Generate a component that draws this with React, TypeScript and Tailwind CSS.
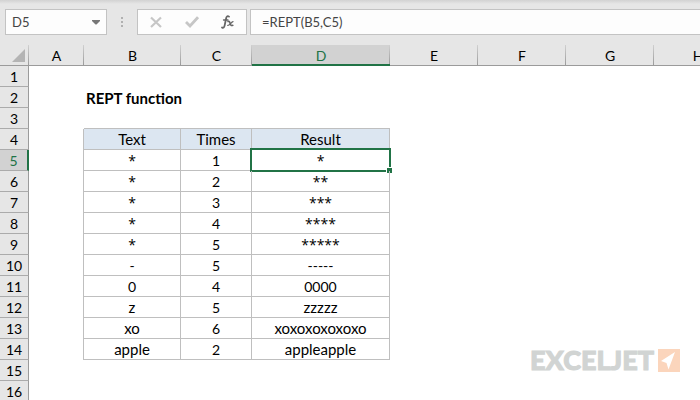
import clsx from "clsx";

const columns = [
  { name: "A", width: "w-[55px]" },
  { name: "B", width: "w-[97px]" },
  { name: "C", width: "w-[71px]" },
  { name: "D", width: "w-[138px]" },
  { name: "E", width: "w-[88px]" },
  { name: "F", width: "w-[88px]" },
  { name: "G", width: "w-[88px]" },
  { name: "H", width: "w-[88px]" },
];

const cells: Record<number, Record<string, string>> = {
  2: { B: "REPT function" },
  4: { B: "Text", C: "Times", D: "Result" },
  5: { B: "*", C: "1", D: "*" },
  6: { B: "*", C: "2", D: "**" },
  7: { B: "*", C: "3", D: "***" },
  8: { B: "*", C: "4", D: "****" },
  9: { B: "*", C: "5", D: "*****" },
  10: { B: "-", C: "5", D: "-----" },
  11: { B: "0", C: "4", D: "0000" },
  12: { B: "z", C: "5", D: "zzzzz" },
  13: { B: "xo", C: "6", D: "xoxoxoxoxoxo" },
  14: { B: "apple", C: "2", D: "appleapple" },
};

const rows = Array.from({ length: 16 }, (_, i) => i + 1);
const active = { column: "D", row: 5 };

export default function App() {
  return (
    <div className="relative h-screen overflow-hidden bg-white font-['Lato',sans-serif] text-sm text-black">
      <FormulaBar />
      <Sheet />
      <Logo />
    </div>
  );
}

function FormulaBar() {
  return (
    <div className="bg-[#e6e6e6]">
      <div className="h-1 bg-linear-to-b from-[#d2d2d2] to-[#e6e6e6]" />
      <div className="flex pt-[5px] pb-[10px] pl-[5px] text-[13px] text-[#444]">
        <div className="flex h-[26px] w-[102px] shrink-0 items-center border border-[#c3c3c3] bg-[#fdfdfd]">
          <input aria-label="Name box" defaultValue="D5" className="w-full min-w-0 pl-[6px] outline-none" />
          <button aria-label="Show names" className="shrink-0 px-[6px]">
            <svg width="8" height="5" viewBox="0 0 8 5" fill="#777">
              <path d="M0 0h8v1L4.500 4.500h-1L0 1z" />
            </svg>
          </button>
        </div>
        <svg className="mx-[14px] mt-2 shrink-0" width="2" height="10" viewBox="0 0 2 10" fill="#b0b0b0">
          <path d="M0 0h2v2H0zM0 4h2v2H0zM0 8h2v2H0z" />
        </svg>
        <div className="flex h-[26px] w-[110px] shrink-0 items-center justify-between border border-[#c3c3c3] bg-[#fdfdfd] px-3">
          <button aria-label="Cancel">
            <svg width="12" height="12" viewBox="0 0 12 12" fill="none" stroke="#c6c6c6" strokeWidth="2.2">
              <path d="M1 1.500l10 9.500M11 1.500L1 11" />
            </svg>
          </button>
          <button aria-label="Enter">
            <svg width="14" height="12" viewBox="0 0 14 12" fill="none" stroke="#c6c6c6" strokeWidth="2.8">
              <path d="M1 6l4 4L13 1.200" />
            </svg>
          </button>
          <button aria-label="Insert function">
            <svg width="13" height="14" viewBox="0 0 13 14" fill="none" stroke="#666" strokeLinecap="round">
              <path strokeWidth="1.800" d="M8 1.600C6.800.6 5.600 1.200 5.200 3L3.600 10.600C3.200 12.600 2.200 13.200 1 12.400" />
              <path strokeWidth="1.300" d="M2.500 5h4.500" />
              <path strokeWidth="1.600" d="M7 6.500c1.600-.6 1.800.6 2.200 2s.8 2.600 2.600 1.800" />
              <path strokeWidth="1.300" d="M12 6.600c-1.600.2-3.200 3.800-5.200 3.800" />
            </svg>
          </button>
        </div>
        <input
          aria-label="Formula"
          defaultValue="=REPT(B5,C5)"
          className="ml-[3px] h-[26px] min-w-0 flex-1 border-y border-l border-[#c3c3c3] bg-[#fdfdfd] pl-[11px] outline-none"
        />
      </div>
    </div>
  );
}

function Sheet() {
  return (
    <table className="w-[742px] table-fixed border-separate border-spacing-0 text-center">
      <thead>
        <tr className="h-[21px]">
          <th className="w-[29px] border-b border-[#9b9b9b] bg-[#e6e6e6] p-0">
            <div className="flex h-5 items-end justify-end bg-linear-to-b from-[#d0d0d0] to-[#9b9b9b] bg-[length:1px_100%] bg-right bg-no-repeat pr-1 pb-[3px]">
              <svg width="13" height="13" viewBox="0 0 13 13" fill="#b4b4b4">
                <path d="M13 0v13H0z" />
              </svg>
            </div>
          </th>
          {columns.map((column) => (
            <ColumnHeader key={column.name} {...column} />
          ))}
        </tr>
      </thead>
      <tbody>
        {rows.map((row) => (
          <tr key={row} className="h-[21px]">
            <th
              scope="row"
              className={clsx(
                "p-0 pt-[2px] font-normal leading-[18px]",
                row === active.row
                  ? "border-r-2 border-b border-r-[#217346] border-b-[#ababab] bg-[#d2d2d2] text-[#217346]"
                  : "border-r border-b border-r-[#9b9b9b] border-b-[#ababab] bg-[#e6e6e6]",
              )}
            >
              {row}
            </th>
            {columns.map((column) => (
              <Cell key={column.name} column={column.name} row={row} />
            ))}
          </tr>
        ))}
      </tbody>
    </table>
  );
}

interface ColumnHeaderProps {
  name: string;
  width: string;
}

function ColumnHeader({ name, width }: ColumnHeaderProps) {
  const selected = name === active.column;
  return (
    <th
      scope="col"
      className={clsx(
        "p-0 font-normal",
        width,
        selected ? "border-b-2 border-[#217346] bg-[#d2d2d2] text-[#217346]" : "border-b border-[#9b9b9b] bg-[#e6e6e6]",
      )}
    >
      <div
        className={clsx(
          "bg-linear-to-b from-[#d0d0d0] to-[#9b9b9b] bg-[length:1px_100%] bg-right bg-no-repeat leading-[22px]",
          selected ? "h-[19px]" : "h-5",
        )}
      >
        {name}
      </div>
    </th>
  );
}

interface CellProps {
  column: string;
  row: number;
}

function Cell({ column, row }: CellProps) {
  const text = cells[row]?.[column] ?? "";
  const inTable = row >= 4 && row <= 14 && "BCD".includes(column);
  // Cells above and to the left of the range draw its outer edge.
  const lineRight = inTable || (column === "A" && row >= 4 && row <= 14);
  const lineBottom = inTable || (row === 3 && "BCD".includes(column));
  const isActive = column === active.column && row === active.row;
  return (
    <td
      className={clsx(
        "relative border-[#bfbfbf] p-0 leading-[18px] whitespace-nowrap",
        lineRight && "border-r",
        lineBottom && "border-b",
        inTable && row === 4 && "bg-[#dce6f1]",
        row === 2 && "pl-[2px] text-left font-bold",
        /[a-z]/.test(text) ? "py-px text-[15px]" : "pt-[2px]",
        text.startsWith("*") && "font-['Open_Sans',sans-serif]",
      )}
    >
      {text}
      {isActive && (
        <div className="absolute -inset-x-[2px] -inset-y-[2px] border-2 border-[#217346]">
          <div className="absolute -right-[3px] -bottom-[3px] size-[6px] border-t border-l border-white bg-[#217346]" />
        </div>
      )}
    </td>
  );
}

function Logo() {
  return (
    <div className="absolute right-5 bottom-7 flex items-center gap-1">
      <span className="font-['Lato',sans-serif] text-[27px] leading-6 font-black text-[#d1d4d3] [-webkit-text-stroke:1px_#d1d4d3]">
        EXCELJET
      </span>
      <svg width="22" height="23" viewBox="0 0 22 23">
        <path fill="#fbd5bc" d="M0 0h22v23H0z" />
        <path fill="#fff" d="M17 3L3 12l5.500 2 2 6.500z" />
      </svg>
    </div>
  );
}
